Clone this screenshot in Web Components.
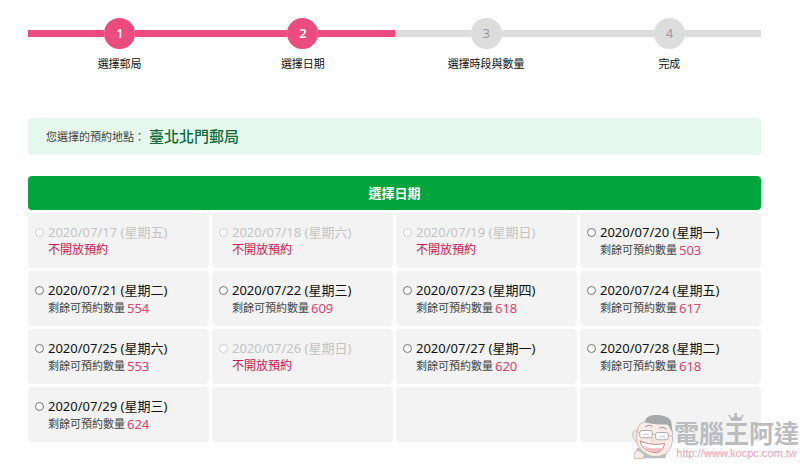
<!DOCTYPE html>
<html lang="zh-Hant">
<head>
<meta charset="utf-8">
<meta name="viewport" content="width=device-width, initial-scale=1">
<title>選擇日期</title>
<style>
  * { box-sizing: border-box; }
  body {
    margin: 0;
    background: #fefefe;
    color: #111;
    font-family: "Noto Sans", "Noto Sans CJK TC", sans-serif;
    font-size: 11px;
    line-height: 18px;
  }
</style>
</head>
<body>
<booking-page>
  <step-progress>
    <step-item number="1" state="done">選擇郵局</step-item>
    <step-item number="2" state="done">選擇日期</step-item>
    <step-item number="3">選擇時段與數量</step-item>
    <step-item number="4">完成</step-item>
  </step-progress>
  <place-notice label="您選擇的預約地點：">臺北北門郵局</place-notice>
  <date-table></date-table>
  <site-watermark slot="overlay"></site-watermark>
</booking-page>

<script>
class BookingPage extends HTMLElement {
  constructor() {
    super();
    this.attachShadow({ mode: "open" });
    this.shadowRoot.innerHTML = `
    <style>
      :host {
        display: block;
        position: relative;
        box-sizing: border-box;
        min-height: 100vh;
        padding: 18px 39px 24px 28px;
      }
    </style>
    <main><slot></slot></main>
    <slot name="overlay"></slot>`;
  }
}

class StepProgress extends HTMLElement {
  constructor() {
    super();
    this.attachShadow({ mode: "open" });
    this.shadowRoot.innerHTML = `
    <style>
      :host { display: flex; margin-bottom: 45px; }
    </style>
    <slot></slot>`;
  }
}

class StepItem extends HTMLElement {
  constructor() {
    super();
    this.attachShadow({ mode: "open" });

    const number = this.getAttribute("number");

    this.shadowRoot.innerHTML = `
    <style>
      :host {
        --step-color: #dcdcdc;
        --step-text: #999;
        flex: 1;
        text-align: center;
      }
      :host([state="done"]) {
        --step-color: #ec4b80;
        --step-text: #fff;
      }
      .track {
        display: flex;
        align-items: center;
        margin-bottom: 6px;
      }

      /* The line on both sides of the circle */
      .track::before, .track::after {
        content: "";
        flex: 1;
        height: 7px;
        background: var(--step-color);
      }
      .circle {
        width: 31px;
        border-radius: 50%;
        background: var(--step-color);
        color: var(--step-text);
        font-size: 13px;
        line-height: 31px;
      }
      :host([state="done"]) .circle { font-weight: 600; }
    </style>
    <div class="track"><span class="circle">${number}</span></div>
    <slot></slot>`;
  }
}

class PlaceNotice extends HTMLElement {
  constructor() {
    super();
    this.attachShadow({ mode: "open" });

    const label = this.getAttribute("label");

    this.shadowRoot.innerHTML = `
    <style>
      :host {
        display: flex;
        align-items: center;
        gap: 4px;
        padding: 8px 18px;
        margin-bottom: 21px;
        border-radius: 4px;
        background: #e6f7ed;
        line-height: 21px;
      }
      .label { font-size: 11px; color: #444; }
      .place { font-size: 15px; font-weight: 500; color: #0b6b37; }
    </style>
    <span class="label">${label}</span>
    <span class="place"><slot></slot></span>`;
  }
}

const DAYS = [
  ["2020/07/17 (星期五)", null],
  ["2020/07/18 (星期六)", null],
  ["2020/07/19 (星期日)", null],
  ["2020/07/20 (星期一)", 503],
  ["2020/07/21 (星期二)", 554],
  ["2020/07/22 (星期三)", 609],
  ["2020/07/23 (星期四)", 618],
  ["2020/07/24 (星期五)", 617],
  ["2020/07/25 (星期六)", 553],
  ["2020/07/26 (星期日)", null],
  ["2020/07/27 (星期一)", 620],
  ["2020/07/28 (星期二)", 618],
  ["2020/07/29 (星期三)", 624],
];

class DateTable extends HTMLElement {
  constructor() {
    super();
    this.attachShadow({ mode: "open" });

    let rows = "";
    for (let i = 0; i < DAYS.length; i += 4) {
      rows += "<tr>";
      for (let j = i; j < i + 4; j++) rows += `<td>${this.renderDay(DAYS[j], j)}</td>`;
      rows += "</tr>";
    }

    this.shadowRoot.innerHTML = `
    <style>
      /* border-spacing also applies outside the cells, so pull it back */
      :host { display: block; margin: -3px; }
      table {
        width: 100%;
        table-layout: fixed;
        border-collapse: separate;
        border-spacing: 3px;
      }
      th {
        padding: 8px;
        border-radius: 4px;
        background: #00a63c;
        color: #fff;
        font-size: 13px;
        font-weight: 700;
        line-height: 18px;
      }
      td {
        height: 55px;
        box-sizing: border-box;
        padding: 10px 7px 9px;
        border-radius: 4px;
        background: #f3f3f3;
        vertical-align: top;
      }
      label {
        display: grid;
        grid-template-columns: 9px 1fr;
        column-gap: 4px;
        align-items: center;
        line-height: 18px;
        white-space: nowrap;
        cursor: pointer;
      }
      input {
        appearance: none;
        box-sizing: border-box;
        width: 9px;
        height: 9px;
        margin: 0;
        border: 1px solid #777;
        border-radius: 50%;
        background: #fff;
      }
      input:checked { background: #ec4b80; }
      .date { font-size: 13px; }
      .note {
        grid-column: 2;
        display: flex;
        align-items: center;
        gap: 2px;
        height: 18px;
        font-size: 11px;
        color: #444;
      }
      .count { font-size: 13px; color: #e0446e; }
      .closed { cursor: default; }
      .closed input { border-color: #ccc; }
      .closed .date { color: #c4c4c4; }
      .closed .note { font-size: 12px; color: #cc1a50; }
    </style>

    <table>
      <thead><tr><th colspan="4">選擇日期</th></tr></thead>
      <tbody>${rows}</tbody>
    </table>`;
  }

  renderDay(day, index) {
    if (!day) return "";
    const [date, left] = day;
    const closed = left === null;
    const note = closed ? "不開放預約" : `剩餘可預約數量<span class="count">${left}</span>`;
    return `
      <label class="${closed ? "closed" : "open"}" for="day-${index}">
        <input type="radio" name="day" id="day-${index}" value="${date}" ${closed ? "disabled" : ""}>
        <span class="date">${date}</span>
        <span class="note">${note}</span>
      </label>`;
  }
}

class SiteWatermark extends HTMLElement {
  constructor() {
    super();
    this.attachShadow({ mode: "open" });
    this.shadowRoot.innerHTML = `
    <style>
      :host {
        position: absolute;
        right: 1px;
        bottom: 12px;
        display: flex;
        align-items: flex-end;
        font-family: "Liberation Sans", "Noto Sans CJK TC", sans-serif;
        pointer-events: none;
      }
      .face { width: 42px; height: 45px; }
      .crown { width: 16px; height: 8px; }
      .brand {
        display: flex;
        flex-direction: column;
        align-items: center;
      }
      .name {
        font-size: 25px;
        font-weight: 700;
        line-height: 26px;
        color: #bbbcbf;
      }
      .url {
        font-size: 11px;
        line-height: 12px;
        color: #f0a3b5;
      }
    </style>
    <svg class="face" viewBox="36 66 126 136" aria-hidden="true">
      <path d="M51 168 L44 200 H136 L140 186 Z" fill="#bfc0c2"/>
      <path d="M52 118 C42 111 34 121 39 134 C41 145 47 152 54 152 Z" fill="#f7e6dd" stroke="#a9a9ab" stroke-width="2"/>
      <path d="M60 96 C82 82 128 84 152 104 C163 124 159 160 148 176 C137 190 116 198 94 193 C66 184 51 166 50 145 C49 124 51 107 60 96 Z" fill="#faece4" stroke="#a9a9ab" stroke-width="2"/>
      <path d="M74 91 C75 76 91 67 110 69 C130 69 150 76 154 88 L158 121 C151 115 148 103 144 98 C122 98 97 98 74 91 Z" fill="#a8a9ab"/>
      <path d="M76 105 Q86 96 97 104 M118 109 Q130 103 140 112" fill="none" stroke="#aaa" stroke-width="4"/>
      <rect x="59" y="116" width="38" height="22" rx="6" fill="#fff" stroke="#aaa" stroke-width="3"/>
      <rect x="107" y="122" width="38" height="22" rx="6" fill="#fff" stroke="#aaa" stroke-width="3"/>
      <path d="M97 126 L107 129 M50 120 L59 123 M145 131 L156 133 M70 129 Q79 123 87 130 M118 135 Q127 129 135 136" fill="none" stroke="#aaa" stroke-width="2"/>
      <path d="M98 138 Q90 149 103 147" fill="none" stroke="#c3aca3" stroke-width="2"/>
      <path d="M60 147 C81 158 108 160 134 155 C130 180 110 188 88 179 C72 173 62 161 60 147 Z" fill="#fff" stroke="#b58f8e" stroke-width="3"/>
      <path d="M70 162 Q96 175 127 168 C117 183 99 184 84 175 Z" fill="#f3b9bd"/>
      <path d="M43 201 C40 188 45 177 53 176 C62 176 66 185 73 188 L70 201 Z" fill="#faece4" stroke="#b9aaa4" stroke-width="2"/>
    </svg>
    <div class="brand">
      <svg class="crown" viewBox="0 0 48 24" aria-hidden="true">
        <path d="M9 23 L4 9 L16 15 L23 3 L31 15 L44 9 L39 23 Z" fill="#b5b6b9"/>
        <circle cx="4" cy="8" r="3" fill="#b5b6b9"/>
        <circle cx="23" cy="4" r="4" fill="#b5b6b9"/>
        <circle cx="44" cy="8" r="3" fill="#b5b6b9"/>
      </svg>
      <span class="name">電腦王阿達</span>
      <span class="url">http://www.kocpc.com.tw</span>
    </div>`;
  }
}

customElements.define("booking-page", BookingPage);
customElements.define("step-progress", StepProgress);
customElements.define("step-item", StepItem);
customElements.define("place-notice", PlaceNotice);
customElements.define("date-table", DateTable);
customElements.define("site-watermark", SiteWatermark);
</script>
</body>
</html>
